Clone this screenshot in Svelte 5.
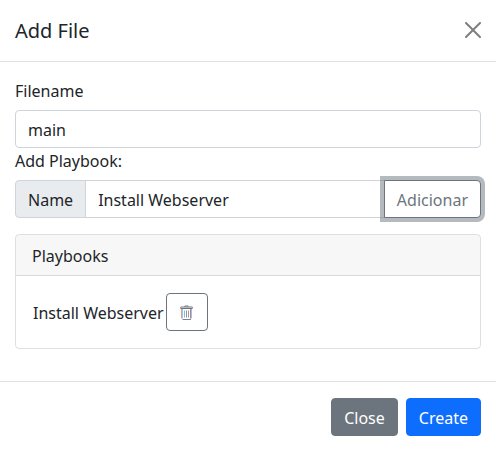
<script>
  let filename = $state('main');
  let name = $state('Install Webserver');
  let playbooks = $state(['Install Webserver']);

  function add() {
    playbooks.push(name);
  }

  function remove(index) {
    playbooks.splice(index, 1);
  }
</script>

<div class="modal">
  <header>
    <h5>Add File</h5>
    <button class="dismiss" aria-label="Close">
      <svg width="16" height="16" viewBox="0 0 16 16"><path d="M.293.293a1 1 0 011.414 0L8 6.586 14.293.293a1 1 0 111.414 1.414L9.414 8l6.293 6.293a1 1 0 01-1.414 1.414L8 9.414l-6.293 6.293a1 1 0 01-1.414-1.414L6.586 8 .293 1.707a1 1 0 010-1.414z" /></svg>
    </button>
  </header>

  <div class="body">
    <label for="filename">Filename</label>
    <input id="filename" type="text" bind:value={filename} />
    <label for="playbook">Add Playbook:</label>
    <div class="group">
      <span class="prefix">Name</span>
      <input id="playbook" type="text" bind:value={name} />
      <button class="btn outline add" onclick={add}>Adicionar</button>
    </div>

    <section class="card">
      <div class="card-header">Playbooks</div>
      <div class="card-body">
        {#each playbooks as playbook, i}
          <div class="row">
            <span class="item">{playbook}</span>
            <button class="btn outline delete" aria-label="Remove" onclick={() => remove(i)}>
              <svg width="16" height="16" viewBox="0 0 16 16" fill="none">
                <path stroke="#6c757d" d="M1.500 2.500a.5.5 0 0 1 .5-.5h11a.5.5 0 0 1 .5.5v.5a.5.5 0 0 1-.5.5H2a.5.5 0 0 1-.5-.5zM5.500 1.500a.5.5 0 0 1 .5-.5h3a.5.5 0 0 1 .5.5" />
                <path stroke="#d9a88c" d="M2.500 4v9.500" />
                <path stroke="#9cc4ea" d="M3.500 4v9.500M12.500 4v9.500" />
                <path stroke="#a58b82" d="M11.500 4v9.500" />
                <path stroke="#7a838b" d="M3.500 14.500h8.500" />
                <path stroke="#86b8e6" d="M5.500 5.500v7" />
                <path stroke="#8797ab" d="M7.500 5.500v7" />
                <path stroke="#c58d7e" d="M9.500 5.500v7" />
              </svg>
            </button>
          </div>
        {/each}
      </div>
    </section>
  </div>

  <footer>
    <button class="btn secondary">Close</button>
    <button class="btn primary">Create</button>
  </footer>
</div>

<style>
  :global(body) {
    margin: 0;
    background: #fff;
  }
  .modal,
  .modal :global(*) {
    box-sizing: border-box;
  }
  .modal {
    height: 450px;
    background: #fff;
    color: #212529;
    font: 400 16px/1.5 "Noto Sans", sans-serif;
  }
  header {
    display: flex;
    align-items: center;
    justify-content: space-between;
    height: 62px;
    padding: 0 15px 1px;
    border-bottom: 1px solid #dee2e6;
  }
  h5 {
    margin: 0;
    padding-top: 2px;
    font-size: 20px;
    font-weight: 400;
    line-height: 1.5;
  }
  .dismiss {
    display: flex;
    margin: -8px -8px -8px auto;
    padding: 8px;
    border: 0;
    background: none;
    opacity: 0.5;
  }
  .body {
    padding: 16px 15px;
  }
  label {
    display: block;
    padding-top: 1px;
    margin-bottom: 7px;
  }
  input {
    display: block;
    width: 100%;
    height: 38px;
    padding: 7px 12px 5px;
    border: 1px solid #ced4da;
    border-radius: 4px;
    background: #fff;
    color: inherit;
    font: inherit;
    outline: 0;
  }
  .group {
    display: flex;
    margin-bottom: 16px;
  }
  .prefix {
    padding: 7px 12px 5px;
    border: 1px solid #ced4da;
    border-radius: 4px 0 0 4px;
    background: #e9ecef;
  }
  .group input {
    flex: 1;
    width: 1%;
    min-width: 0;
    margin-left: -1px;
    border-radius: 0;
  }
  .btn {
    padding: 7px 12px 5px;
    border: 1px solid transparent;
    border-radius: 4px;
    font: inherit;
    color: #fff;
    cursor: pointer;
  }
  .outline {
    border-color: #6c757d;
    background: #fff;
    color: #6c757d;
  }
  .add {
    position: relative;
    margin-left: -1px;
    border-radius: 0 4px 4px 0;
    box-shadow: 0 0 0 4px rgba(108, 117, 125, 0.5);
  }
  .card {
    margin-bottom: 16px;
    border: 1px solid rgba(0, 0, 0, 0.125);
    border-radius: 4px;
  }
  .card-header {
    padding: 9px 16px 7px;
    border-bottom: 1px solid rgba(0, 0, 0, 0.125);
    border-radius: 3px 3px 0 0;
    background: rgba(0, 0, 0, 0.03);
  }
  .card-body {
    padding: 17px;
  }
  .row {
    display: flex;
    align-items: center;
    gap: 2px;
  }
  .item {
    padding-top: 2px;
  }
  .delete {
    display: flex;
    align-items: flex-start;
    width: 42px;
    height: 38px;
    padding: 11px 12px 0;
  }
  .delete svg {
    flex: none;
  }
  footer {
    display: flex;
    justify-content: flex-end;
    gap: 8px;
    padding: 16px 15px;
    border-top: 1px solid #dee2e6;
  }
  .secondary {
    border-color: #6c757d;
    background: #6c757d;
  }
  .primary {
    border-color: #0d6efd;
    background: #0d6efd;
  }
</style>
